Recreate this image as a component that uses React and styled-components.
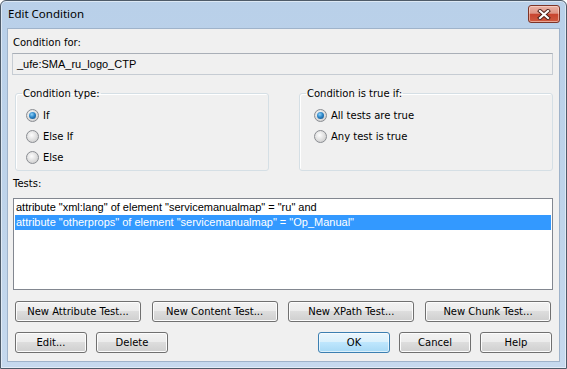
import styled, { createGlobalStyle } from "styled-components"

const GlobalStyle = createGlobalStyle`
    html, body {
        margin: 0;
        padding: 0;
        background: #ffffff;
    }
`

const Window = styled.div`
    box-sizing: border-box;
    width: 567px;
    height: 369px;
    display: flex;
    flex-direction: column;
    border: 1px solid #4e5b69;
    border-radius: 6px 6px 0 0;
    background: linear-gradient(to bottom, #b9d0e9 0%, #bfd4ea 60%, #c6d9ee 100%);
    padding: 0 6px 6px;
    box-shadow: inset 0 0 0 1px rgba(255, 255, 255, 0.5);
`

const TitleBar = styled.div`
    height: 27px;
    flex-shrink: 0;
    display: flex;
    justify-content: space-between;
    align-items: flex-start;
    padding: 4px 0 0 1px;
    box-sizing: border-box;
`

const Title = styled.span`
    font-family: "Noto Sans", "Open Sans", sans-serif;
    font-size: 11.5px;
    line-height: 16px;
    margin-top: 1px;
    color: #000;
`

const CloseButton = styled.div`
    box-sizing: border-box;
    width: 32px;
    height: 18px;
    display: flex;
    align-items: center;
    justify-content: center;
    border: 1px solid #7d3427;
    border-radius: 3px;
    background: linear-gradient(to bottom, #eab1a4 0%, #de9585 45%, #c8452f 52%, #cf5a3f 100%);
    box-shadow: inset 0 0 0 1px rgba(255, 225, 215, 0.55);
`

const Client = styled.div`
    flex: 1;
    display: flex;
    flex-direction: column;
    border: 1px solid #9fb3ca;
    background: #f0f0f0;
    padding: 0 6px 0 4px;
    font-family: "DejaVu Sans", Verdana, sans-serif;
    font-size: 10px;
    color: #000;
`

const Label = styled.div`
    line-height: 13px;
    margin: ${p => p.$top}px 0 0 1px;
`

const ReadOnlyField = styled.div`
    box-sizing: border-box;
    height: 22px;
    margin-top: 4px;
    display: flex;
    align-items: center;
    padding-left: 4px;
    border: 1px solid #c6ccd3;
    border-top-color: #a9afb7;
    background: #f0f0f0;
    font-family: "Liberation Sans", Arial, sans-serif;
    font-size: 11px;
`

const GroupRow = styled.div`
    display: grid;
    grid-template-columns: 1fr 1fr;
    gap: 30px;
    margin: 12px 0 0 3px;
`

const GroupBox = styled.fieldset`
    margin: 0;
    min-width: 0;
    padding: 5px 0 2px 0;
    border: 1px solid #d5dfe5;
    border-radius: 3px;
    box-shadow: inset 1px 1px 0 #ffffff;

    legend {
        margin-left: 6px;
        padding: 0 1px;
        line-height: 13px;
    }
`

const RadioRow = styled.label`
    height: 21px;
    display: flex;
    align-items: center;
    gap: 4px;
    padding-left: ${p => p.$indent}px;
`

const RadioCircle = styled.span`
    box-sizing: border-box;
    width: 13px;
    height: 13px;
    flex-shrink: 0;
    border-radius: 50%;
    border: 1px solid #8a8d92;
    background: radial-gradient(circle at 42% 38%, #fdfdfd 0%, #e6e6e6 40%, #c4c4c4 100%);
    display: flex;
    align-items: center;
    justify-content: center;

    &::after {
        content: "";
        display: ${p => (p.$checked ? "block" : "none")};
        width: 7px;
        height: 7px;
        border-radius: 50%;
        background: radial-gradient(circle at 40% 35%, #8fd2fa 0%, #2c86c8 45%, #0e467c 100%);
    }
`

const ListBox = styled.div`
    box-sizing: border-box;
    height: 92px;
    margin: 8px 0 0 1px;
    padding: 1px;
    border: 1px solid #828790;
    background: #ffffff;
    font-family: "Liberation Sans", Arial, sans-serif;
    font-size: 11px;
`

const ListItem = styled.div`
    height: 15px;
    line-height: 15px;
    padding-left: 1px;
    white-space: nowrap;
    background: ${p => (p.$selected ? "#3399ff" : "transparent")};
    color: ${p => (p.$selected ? "#ffffff" : "#000000")};
`

const ButtonRow = styled.div`
    display: flex;
    justify-content: ${p => p.$spread ? "space-between" : "flex-start"};
    gap: 9px;
    margin: ${p => p.$top}px ${p => p.$right}px 0 3px;
`

const Spacer = styled.div`
    flex: 1;
`

const Button = styled.button`
    box-sizing: border-box;
    width: ${p => p.$w}px;
    height: 21px;
    padding: 0;
    border: 1px solid ${p => (p.$default ? "#3c7fb1" : "#707070")};
    border-radius: 3px;
    background: ${p => p.$default
        ? "linear-gradient(to bottom, #eaf6fd 0%, #d9f0fc 50%, #bee6fd 50%, #a7d9f5 100%)"
        : "linear-gradient(to bottom, #f2f2f2 0%, #ebebeb 50%, #dddddd 50%, #cfcfcf 100%)"};
    box-shadow: inset 0 0 0 1px ${p => (p.$default ? "rgba(255,255,255,0.6)" : "#fcfcfc")};
    font-family: "DejaVu Sans", Verdana, sans-serif;
    font-size: 10px;
    color: #000;
`

const Radio = ({ checked, indent, children }) => (
    <RadioRow $indent={indent}>
        <RadioCircle $checked={checked} />
        <span>{children}</span>
    </RadioRow>
)

export default function App() {
    return (
        <>
            <GlobalStyle />
            <Window>
                <TitleBar>
                    <Title>Edit Condition</Title>
                    <CloseButton>
                        <svg width="14" height="11" viewBox="0 0 14 11">
                            <path d="M3 2 L11 9 M11 2 L3 9" stroke="#4a1d16" strokeWidth="4" strokeLinecap="square" />
                            <path d="M3 2 L11 9 M11 2 L3 9" stroke="#ffffff" strokeWidth="2.2" strokeLinecap="square" />
                        </svg>
                    </CloseButton>
                </TitleBar>
                <Client>
                    <Label $top={7}>Condition for:</Label>
                    <ReadOnlyField>_ufe:SMA_ru_logo_CTP</ReadOnlyField>

                    <GroupRow>
                        <GroupBox>
                            <legend>Condition type:</legend>
                            <Radio indent={10} checked>If</Radio>
                            <Radio indent={10}>Else If</Radio>
                            <Radio indent={10}>Else</Radio>
                        </GroupBox>
                        <GroupBox>
                            <legend>Condition is true if:</legend>
                            <Radio indent={14} checked>All tests are true</Radio>
                            <Radio indent={14}>Any test is true</Radio>
                        </GroupBox>
                    </GroupRow>

                    <Label $top={6}>Tests:</Label>
                    <ListBox>
                        <ListItem>attribute "xml:lang" of element "servicemanualmap" = "ru" and</ListItem>
                        <ListItem $selected>attribute "otherprops" of element "servicemanualmap" = "Op_Manual"</ListItem>
                    </ListBox>

                    <ButtonRow $spread $top={11} $right={2}>
                        <Button $w={126}>New Attribute Test...</Button>
                        <Button $w={126}>New Content Test...</Button>
                        <Button $w={126}>New XPath Test...</Button>
                        <Button $w={126}>New Chunk Test...</Button>
                    </ButtonRow>
                    <ButtonRow $top={10} $right={1}>
                        <Button $w={72}>Edit...</Button>
                        <Button $w={72}>Delete</Button>
                        <Spacer />
                        <Button $w={72} $default>OK</Button>
                        <Button $w={72}>Cancel</Button>
                        <Button $w={72}>Help</Button>
                    </ButtonRow>
                </Client>
            </Window>
        </>
    )
}
